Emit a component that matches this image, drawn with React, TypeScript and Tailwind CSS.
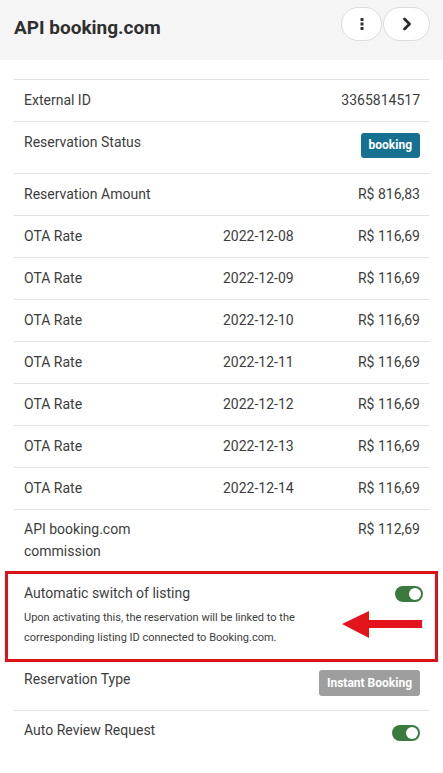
import React from 'react';

const otaRates = [
  '2022-12-08',
  '2022-12-09',
  '2022-12-10',
  '2022-12-11',
  '2022-12-12',
  '2022-12-13',
  '2022-12-14',
];

const Toggle: React.FC = () => (
  <div className="relative w-[28px] h-[16px] rounded-full bg-[#3b7a3f]">
    <div className="absolute right-[2px] top-[2px] w-[12px] h-[12px] rounded-full bg-white"></div>
  </div>
);

const Row: React.FC<{ label: string; date?: string; value?: React.ReactNode }> = ({ label, date, value }) => (
  <div className="grid grid-cols-[199px_1fr_auto] items-center h-[42px] pl-[10px] pr-[9px] border-b border-[#e2e2e2]">
    <span>{label}</span>
    <span>{date}</span>
    <span>{value}</span>
  </div>
);

export default function App() {
  return (
    <div className="w-[443px] min-h-[773px] bg-white text-[14px] leading-[21px] text-[#3d3d3d]" style={{ fontFamily: 'Roboto, "Liberation Sans", sans-serif' }}>
      {/* Header */}
      <div className="h-[60px] bg-[#f5f5f5] flex justify-between px-[14px]">
        <h1 className="pt-[11px] text-[19px] leading-[34px] font-bold text-[#2f2f2f]">API booking.com</h1>
        <div className="flex pt-[7px] mr-[-1px]">
          <button className="w-[41px] h-[34px] rounded-full bg-white border border-[#dcdcdc] flex items-center justify-center">
            <svg width="4" height="12" viewBox="0 0 4 12" fill="#333">
              <rect x="0.5" y="0" width="3" height="3" />
              <rect x="0.5" y="4.5" width="3" height="3" />
              <rect x="0.5" y="9" width="3" height="3" />
            </svg>
          </button>
          <button className="ml-[1px] w-[47px] h-[34px] rounded-full bg-white border border-[#dcdcdc] flex items-center justify-center">
            <svg width="10" height="14" viewBox="0 0 10 14" fill="none" stroke="#2b2b2b" strokeWidth="2.8" strokeLinecap="round" strokeLinejoin="round">
              <path d="M2.5 2 L7.5 7 L2.5 12" />
            </svg>
          </button>
        </div>
      </div>

      {/* Details */}
      <div className="mx-[14px] mt-[19px] border-t border-[#e2e2e2]">
        <Row label="External ID" value="3365814517" />
        <div className="flex justify-between items-start pt-[10px] pb-[15px] pl-[10px] pr-[9px] border-b border-[#e2e2e2]">
          <span>Reservation Status</span>
          <span className="h-[25px] px-[8px] rounded-[3px] bg-[#16708f] text-white text-[12px] font-bold flex items-center mt-[1px]">booking</span>
        </div>
        <Row label="Reservation Amount" value="R$ 816,83" />
        {otaRates.map((d) => (
          <Row key={d} label="OTA Rate" date={d} value="R$ 116,69" />
        ))}
        <div className="flex justify-between items-start pt-[8px] pb-[9px] pl-[10px] pr-[9px] leading-[22px]">
          <span className="w-[130px]">API booking.com commission</span>
          <span>R$ 112,69</span>
        </div>

        {/* Highlighted row */}
        <div className="mx-[-9px] border-[3px] border-[#dd1219] pl-[16px] pr-[12px] pt-[9px] pb-[11px]">
          <div className="flex justify-between items-center">
            <span>Automatic switch of listing</span>
            <Toggle />
          </div>
          <div className="flex justify-between items-center">
            <p className="text-[11px] leading-[20px] mt-[4px]">
              Upon activating this, the reservation will be linked to the
              <br />
              corresponding listing ID connected to Booking.com.
            </p>
            <svg width="80" height="28" viewBox="0 0 80 28" className="mr-[1px] mt-[-2px]">
              <polygon points="0,13 27,0 27,9 80,9 80,17 27,17 27,27" fill="#e3141b" />
            </svg>
          </div>
        </div>

        <div className="flex justify-between items-start pt-[7px] pb-[14px] pl-[10px] pr-[9px] border-b border-[#e2e2e2]">
          <span>Reservation Type</span>
          <span className="h-[26px] px-[8px] rounded-[3px] bg-[#9e9e9e] text-white text-[12px] font-bold flex items-center mt-[1px]">Instant Booking</span>
        </div>
        <div className="flex justify-between items-start pt-[9px] pl-[10px] pr-[9px]">
          <span>Auto Review Request</span>
          <div className="mt-[5px]">
            <Toggle />
          </div>
        </div>
      </div>
    </div>
  );
}
